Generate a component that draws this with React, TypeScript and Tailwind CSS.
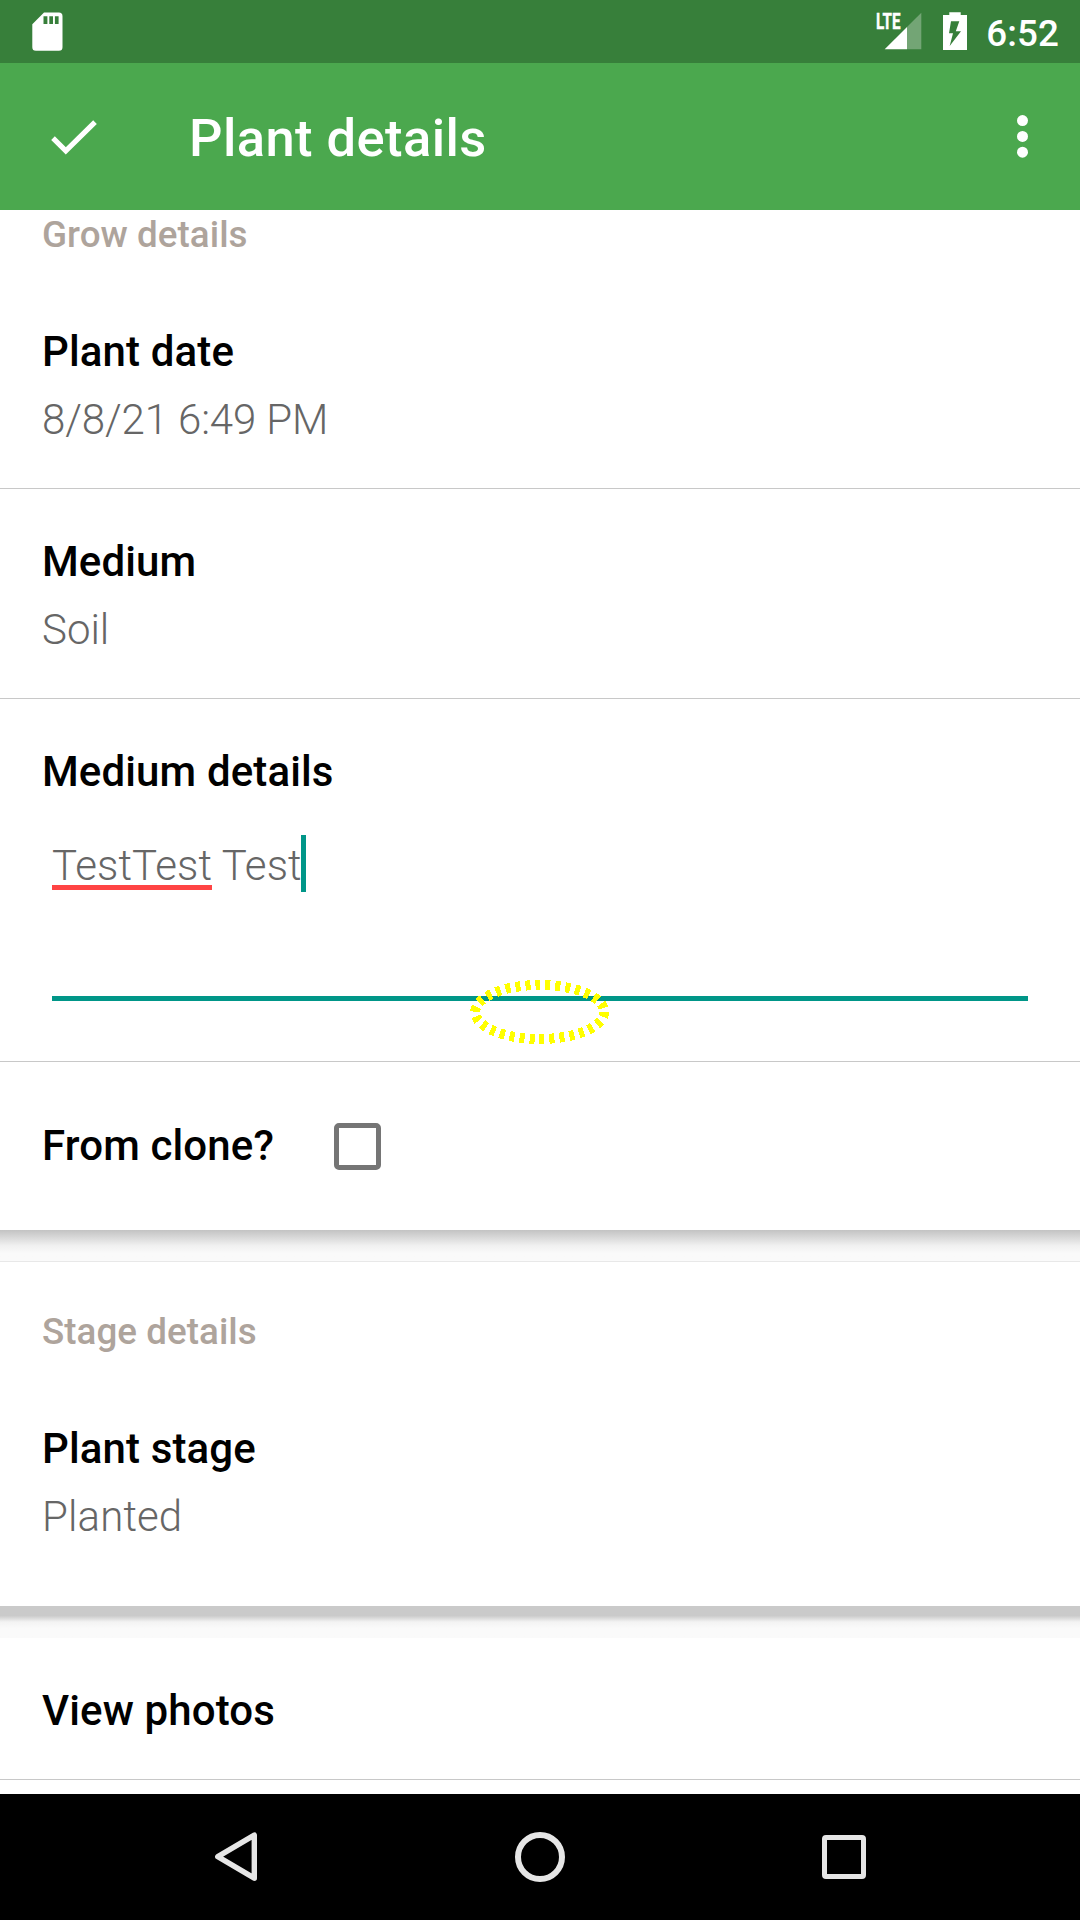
import type { ReactNode } from "react";

function StatusBar() {
  return (
    <div className="flex h-[63px] items-start justify-between bg-[#377f3a] pl-8 pr-[21px] text-white">
      <svg className="mt-3 h-10 w-8" viewBox="0 0 32 40" fill="none">
        <path
          fill="#fff"
          fillRule="evenodd"
          d="M12 .6H26.9A3.6 3.6 0 0 1 30.5 4.2V35.2A3.6 3.6 0 0 1 26.9 38.8H3.9A3.6 3.6 0 0 1 .3 35.2V12.3ZM11.5 4.3V12H15.4V4.3ZM17.3 4.3V12H21V4.3ZM22.9 4.3V12H26.6V4.3Z"
        />
      </svg>
      <div className="flex items-start">
        <svg className="mt-3 h-10 w-[46px] overflow-visible" viewBox="0 0 46 40">
          <text
            x="0"
            y="17"
            textLength="24.5"
            lengthAdjust="spacingAndGlyphs"
            className="fill-white stroke-white stroke-[0.4px] text-[21.5px] font-bold"
          >
            LTE
          </text>
          <path d="M45.3 .7V37.3H31V15Z" fill="#fff" fillOpacity=".3" />
          <path d="M8.7 37.3L31 15V37.3Z" fill="#fff" />
        </svg>
        <svg className="ml-[21px] mt-3 h-10 w-6" viewBox="0 0 24 40">
          <path
            fill="#fff"
            fillRule="evenodd"
            d="M6.3 .2H17.7V3H24V38H0V3H6.3ZM8 9.2L6 21.2H10L6.7 34L18 19.2H12.8L16.3 9.2Z"
          />
        </svg>
        <span className="ml-[19px] mt-3 text-[36.75px] font-medium leading-[43px] tracking-[0.1px]">6:52</span>
      </div>
    </div>
  );
}

function Toolbar() {
  return (
    <header className="flex h-[147px] items-start bg-[#4ba84e] text-white">
      <svg className="ml-[51px] mt-14 h-9 w-[46px]" viewBox="0 0 46 36">
        <path d="M2 19.2L14.8 31.8L44 3.1" fill="none" stroke="#fff" strokeWidth="5.2" />
      </svg>
      <h1 className="ml-[92px] mt-[44px] text-[52.5px] font-medium leading-[62px] tracking-[0.42px]">
        Plant details
      </h1>
      <svg className="ml-auto mr-[51px] mt-[52px] h-11 w-3" viewBox="0 0 12 44" fill="#fff">
        <circle cx="5.5" cy="5.6" r="5.5" />
        <circle cx="5.5" cy="21.4" r="5.5" />
        <circle cx="5.5" cy="37.2" r="5.5" />
      </svg>
    </header>
  );
}

function SectionTitle({ children }: { children: ReactNode }) {
  return (
    <h2 className="text-[36.75px] font-medium leading-[43px] tracking-[0.05px] text-[#aea49c]">{children}</h2>
  );
}

function Label({ children }: { children: ReactNode }) {
  return (
    <div className="text-[42px] font-medium leading-[49px] tracking-[0.13px] text-black">{children}</div>
  );
}

function Value({ children, className = "" }: { children: ReactNode; className?: string }) {
  return (
    <div className={`mt-[19px] text-[42px] font-light leading-[49px] text-[#666] ${className}`}>{children}</div>
  );
}

function FocusMarker() {
  return (
    <svg className="absolute left-[466px] top-[976px] h-[72px] w-[148px]" viewBox="0 0 148 72">
      <ellipse
        cx="73.7"
        cy="36"
        rx="64.5"
        ry="27"
        fill="none"
        stroke="#ff0"
        strokeWidth="10"
        strokeDasharray="5 5"
        shapeRendering="crispEdges"
      />
    </svg>
  );
}

function NavBar() {
  return (
    <nav className="flex h-[126px] items-start bg-black">
      <svg className="ml-[214px] mt-[37px] h-[52px] w-11" viewBox="0 0 44 52">
        <path d="M40.3 4.2V47.2L3.8 25.7Z" fill="none" stroke="#e6e6e6" strokeWidth="5.4" strokeLinejoin="round" />
      </svg>
      <div className="ml-[257px] mt-[38px] size-[50px] rounded-full border-[6px] border-[#e6e6e6]" />
      <div className="ml-[257px] mt-[41px] size-11 rounded-[4px] border-[5.5px] border-[#e6e6e6]" />
    </nav>
  );
}

export default function App() {
  return (
    <div className="relative flex h-[1920px] w-[1080px] flex-col overflow-hidden bg-[#fafafa] font-[Roboto,sans-serif]">
      <StatusBar />
      <Toolbar />
      <main className="flex h-[1584px] flex-col">
        <section className="h-[1020px] bg-white pt-[3px]">
          <div className="border-b border-[#c8c8c8] px-[42px] pb-11">
            <SectionTitle>Grow details</SectionTitle>
            <div className="mt-[71px]">
              <Label>Plant date</Label>
              <Value className="tracking-[-0.12px]">8/8/21 6:49 PM</Value>
            </div>
          </div>
          <div className="border-b border-[#c8c8c8] px-[42px] pb-11 pt-12">
            <Label>Medium</Label>
            <Value>Soil</Value>
          </div>
          <div className="h-[363px] border-b border-[#c8c8c8] px-[42px] pt-12">
            <Label>Medium details</Label>
            <div className="mx-[10px] mt-[39px] flex h-[166px] items-start border-b-[5px] border-[#009688] text-[42px] font-light leading-[49px] tracking-[0.12px] text-[#666]">
              <div className="mt-[6px] flex whitespace-pre">
                <span className="h-[49px] border-b-[5px] border-[#ff4444]">TestTest</span>
                <span> Test</span>
              </div>
              <div className="-ml-px h-[57px] w-[5px] bg-[#009688]" />
            </div>
          </div>
          <div className="flex items-start px-[42px] pt-[59px]">
            <div className="w-[291.5px]">
              <Label>From clone?</Label>
            </div>
            <div className="mt-[1.5px] size-[47.5px] rounded-[5px] border-[5.5px] border-[#757575]" />
          </div>
        </section>
        <div className="h-8 border-b border-[#e8e8e8] bg-linear-to-b from-[#c3c3c3] via-[#f0f0f0] via-50% to-[#fafafa] to-75%" />
        <section className="h-[344px] bg-white px-[42px] pt-12">
          <SectionTitle>Stage details</SectionTitle>
          <div className="mt-[71px]">
            <Label>Plant stage</Label>
            <Value className="tracking-[0.12px]">Planted</Value>
          </div>
        </section>
        <div className="h-8 bg-linear-to-b from-[#cacaca] from-30% via-[#f3f3f3] via-50% to-[#fafafa] to-70%" />
        <section className="grow bg-white">
          <div className="h-[142px] border-b border-[#c8c8c8] px-[42px] pt-12">
            <Label>View photos</Label>
          </div>
        </section>
      </main>
      <NavBar />
      <FocusMarker />
    </div>
  );
}
